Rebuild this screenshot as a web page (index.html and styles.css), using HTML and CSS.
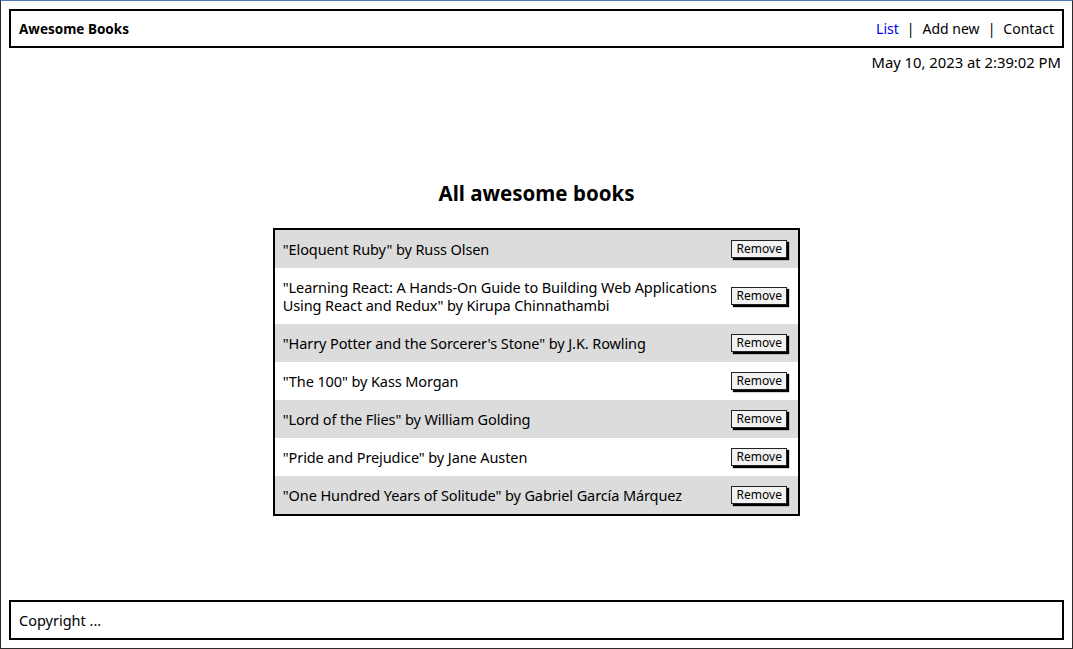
FILE: index.html
```html
<!DOCTYPE html>
<html lang="en">
<head>
<meta charset="utf-8">
<title>Awesome Books</title>
<link rel="stylesheet" href="styles.css">
</head>
<body>
<header class="topbar">
  <span class="brand">Awesome Books</span>
  <nav class="nav">
    <a class="nav-link active" href="#">List</a>
    <span class="sep">|</span>
    <a class="nav-link" href="#">Add new</a>
    <span class="sep">|</span>
    <a class="nav-link" href="#">Contact</a>
  </nav>
</header>
<div class="date">May 10, 2023 at 2:39:02 PM</div>
<main class="main">
  <h1 class="title">All awesome books</h1>
  <ul class="books">
    <li class="book"><span class="book-text">"Eloquent Ruby" by Russ Olsen</span><button class="remove">Remove</button></li>
    <li class="book"><span class="book-text">"Learning React: A Hands-On Guide to Building Web Applications Using React and Redux" by Kirupa Chinnathambi</span><button class="remove">Remove</button></li>
    <li class="book"><span class="book-text">"Harry Potter and the Sorcerer's Stone" by J.K. Rowling</span><button class="remove">Remove</button></li>
    <li class="book"><span class="book-text">"The 100" by Kass Morgan</span><button class="remove">Remove</button></li>
    <li class="book"><span class="book-text">"Lord of the Flies" by William Golding</span><button class="remove">Remove</button></li>
    <li class="book"><span class="book-text">"Pride and Prejudice" by Jane Austen</span><button class="remove">Remove</button></li>
    <li class="book"><span class="book-text">"One Hundred Years of Solitude" by Gabriel García Márquez</span><button class="remove">Remove</button></li>
  </ul>
</main>
<footer class="footer">Copyright ...</footer>
</body>
</html>
```
FILE: styles.css
```css
* { box-sizing: border-box; }
html {
  height: 100%;
  border: 1px solid #2f2b2b;
  border-top-color: #4a78b0;
  background: #fff;
}
body {
  margin: 8px;
  height: calc(100% - 16px);
  display: flex;
  flex-direction: column;
  font-family: "Noto Sans", sans-serif;
  font-size: 14.5px;
  color: #000;
}
.topbar {
  display: flex;
  justify-content: space-between;
  align-items: center;
  height: 39px;
  border: 2px solid #000;
  padding: 0 8px;
}
.brand { font-weight: bold; font-size: 13.5px; }
.nav { display: flex; gap: 8px; font-size: 14px; }
.nav-link { color: #000; text-decoration: none; }
.nav-link.active { color: #0000ee; }
.date {
  text-align: right;
  padding: 5px 3px 0 0;
  line-height: 18px;
  font-size: 14.8px;
}
.main {
  flex: 1;
  display: flex;
  flex-direction: column;
  align-items: center;
  padding-top: 108px;
}
.title {
  margin: 0 0 21px;
  font-size: 20.5px;
  line-height: 28px;
  font-weight: bold;
}
.books {
  list-style: none;
  margin: 0;
  padding: 0;
  width: 50%;
  border: 2px solid #000;
}
.book {
  display: flex;
  align-items: center;
  justify-content: space-between;
  gap: 8px;
  padding: 10px 8px;
  line-height: 18px;
}
.book-text { letter-spacing: -0.1px; }
.book:nth-child(odd) { background: #dcdcdc; }
.remove {
  flex: none;
  width: 56px;
  height: 18px;
  padding: 0;
  font-family: inherit;
  font-size: 12px;
  line-height: 14px;
  background: #f2f2f2;
  border: 1px solid #222;
  box-shadow: 2px 2px 1px #000;
  margin-right: 3px;
}
.footer {
  height: 40px;
  border: 2px solid #000;
  padding: 0 8px;
  display: flex;
  align-items: center;
}
```
